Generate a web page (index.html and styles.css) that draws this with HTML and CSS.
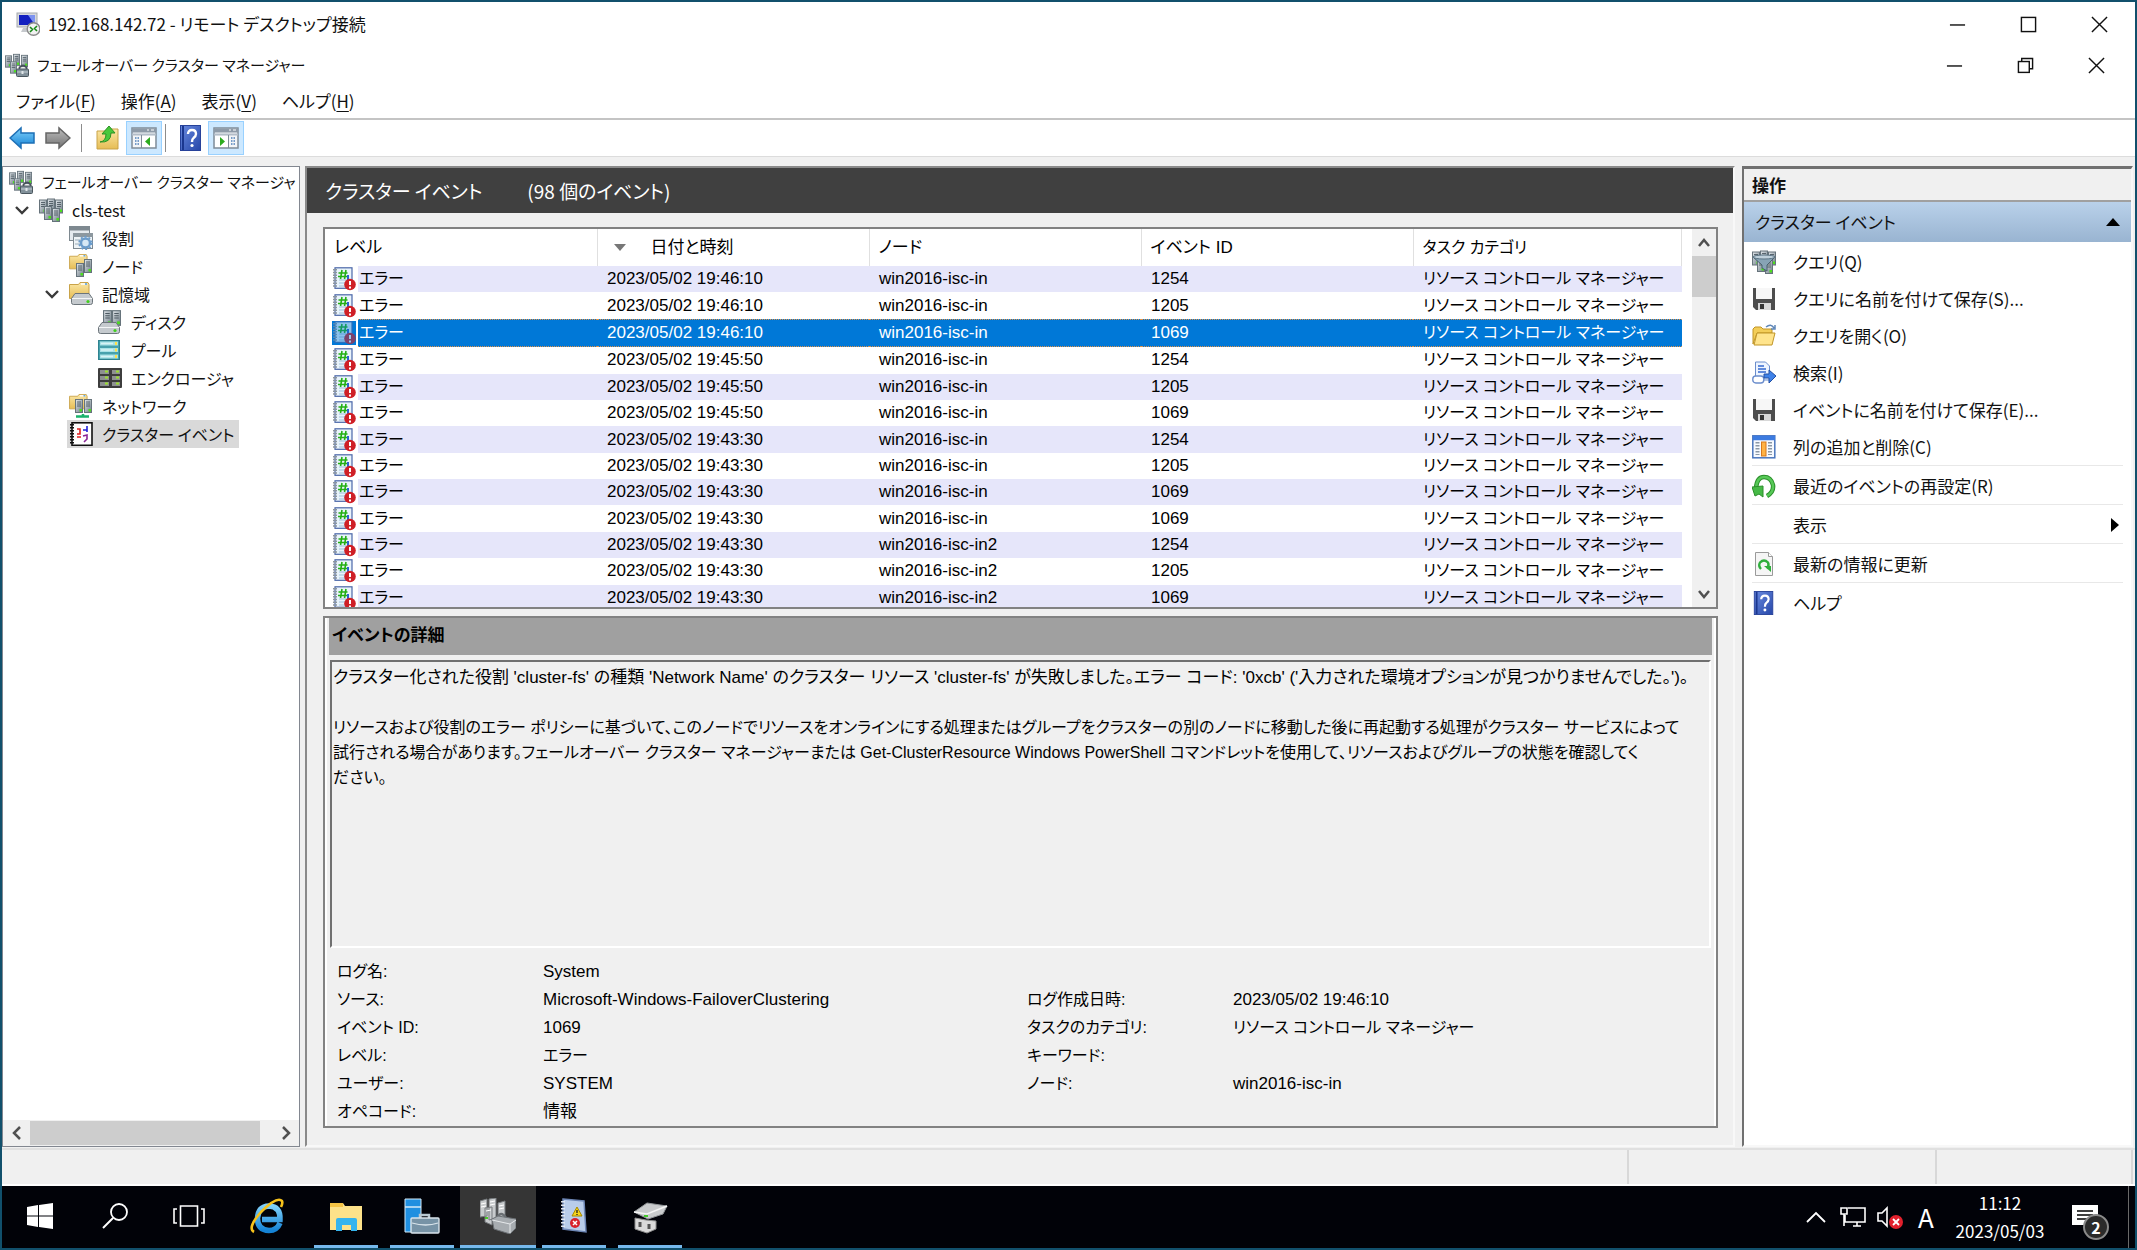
FILE: index.html
```
<!DOCTYPE html>
<html lang="ja">
  <head>
    <meta charset="UTF-8" />
    <meta name="viewport" content="width=device-width, initial-scale=1.0" />
    <title>192.168.142.72 - リモート デスクトップ接続</title>
    <link rel="stylesheet" href="styles.css">
  </head>
  <body>
    <!-- icon sprites -->
    <svg class="sprites" aria-hidden="true">
      <defs>
        <linearGradient id="g-folder" x1="0" y1="0" x2="0" y2="1">
          <stop offset="0" stop-color="#fbe7a6" />
          <stop offset="1" stop-color="#e6bd55" />
        </linearGradient>
        <linearGradient id="g-metal" x1="0" y1="0" x2="1" y2="1">
          <stop offset="0" stop-color="#e3e8ec" />
          <stop offset="1" stop-color="#6d7b85" />
        </linearGradient>
        <linearGradient id="g-blue" x1="0" y1="0" x2="0" y2="1">
          <stop offset="0" stop-color="#7fd0fa" />
          <stop offset="1" stop-color="#1583d6" />
        </linearGradient>
        <linearGradient id="g-gray" x1="0" y1="0" x2="0" y2="1">
          <stop offset="0" stop-color="#bdbdbd" />
          <stop offset="1" stop-color="#737373" />
        </linearGradient>
        <linearGradient id="g-help" x1="0" y1="0" x2="1" y2="1">
          <stop offset="0" stop-color="#6a8be0" />
          <stop offset="1" stop-color="#2546a8" />
        </linearGradient>
      </defs>
      <symbol id="i-server" viewBox="0 0 8 14">
        <rect x=".5" y=".5" width="7" height="13" fill="url(#g-metal)" stroke="#66737b" />
        <path d="M2 3h4M2 5h4M2 7h4" stroke="#4d5962" stroke-width=".9" />
        <rect x="4.500" y="10" width="2.500" height="2.500" fill="#4be01c" />
      </symbol>
      <symbol id="i-servers" viewBox="0 0 24 24">
        <use href="#i-server" x="0" y="1" width="8" height="15" />
        <use href="#i-server" x="8" y="0" width="8" height="15" />
        <use href="#i-server" x="16" y="1" width="8" height="15" />
        <use href="#i-server" x="5" y="8" width="8" height="14" />
        <use href="#i-server" x="13" y="10" width="8" height="14" />
      </symbol>
      <symbol id="i-cluster" viewBox="0 0 24 24">
        <use href="#i-server" x="0" y="1" width="7" height="15" />
        <use href="#i-server" x="8" y="0" width="7" height="14" />
        <use href="#i-server" x="16" y="1" width="7" height="14" />
        <use href="#i-server" x="5" y="8" width="7" height="13" />
        <path d="M14.500 16v-1.500q3.500-4 7 0V16" fill="none" stroke="#47535b" stroke-width="1.800" />
        <rect x="11.500" y="16" width="12" height="7.500" rx="1" fill="#82919a" stroke="#4a565e" />
        <path d="M12 19h11" stroke="#c6d0d6" />
        <rect x="16.500" y="18" width="2" height="3" fill="#e1e7ea" />
      </symbol>
      <symbol id="i-folder" viewBox="0 0 22 20">
        <path d="M.5 2.500h9l1.500-2h8l1 2v14H.5z" fill="url(#g-folder)" stroke="#c9a349" />
        <path d="M12 2h6" stroke="#fff" stroke-width="1.500" />
        <path d="M16 2h2" stroke="#4c9de0" stroke-width="1.500" />
      </symbol>
      <symbol id="i-drive" viewBox="0 0 22 12">
        <path d="M4 .5h14l3.500 5v4q0 2-2 2h-17q-2 0-2-2v-4z" fill="#c5cace" stroke="#6c757b" />
        <path d="M1 5.500h20" stroke="#f4f6f7" />
        <circle cx="17" cy="8.500" r="1.600" fill="#41cf1e" />
      </symbol>
      <symbol id="i-roles" viewBox="0 0 24 24">
        <rect x=".5" y=".5" width="20" height="14" fill="#e5eaee" stroke="#7e8990" />
        <path d="M0 2.500h21" stroke="#7e8990" stroke-width="4" />
        <rect x="4.500" y="7.500" width="19" height="15" fill="#eef3f6" stroke="#7e8990" />
        <path d="M4 9h20" stroke="#8d989f" stroke-width="4" />
        <path d="M6 14h6M6 18h6" stroke="#9bacb8" />
        <circle cx="16.500" cy="17" r="4.500" fill="#d6e8f5" stroke="#6b9ccb" stroke-width="2.500" />
        <circle cx="16.500" cy="17" r="6.300" fill="none" stroke="#6b9ccb" stroke-width="1.800" stroke-dasharray="2 2" />
      </symbol>
      <symbol id="i-nodes" viewBox="0 0 24 24">
        <use href="#i-folder" width="20" height="18" />
        <use href="#i-server" x="7" y="8" width="8" height="16" />
        <use href="#i-server" x="15" y="4" width="8" height="16" />
      </symbol>
      <symbol id="i-storage" viewBox="0 0 24 24">
        <use href="#i-folder" width="22" height="20" />
        <use href="#i-drive" x="2" y="11" width="22" height="12" />
      </symbol>
      <symbol id="i-disk" viewBox="0 0 24 24">
        <use href="#i-server" x="5" y="0" width="9" height="16" />
        <use href="#i-server" x="14" y="0" width="9" height="16" />
        <use href="#i-drive" x="0" y="12" width="22" height="12" />
      </symbol>
      <symbol id="i-pool" viewBox="0 0 24 24">
        <rect x=".5" y="2.500" width="21" height="19" fill="#46a2ad" stroke="#2f8390" />
        <path d="M2 5.500h18M2 12h18M2 18.500h18" stroke="#a6e2e6" stroke-width="4" />
        <path d="M3 5.500h12M3 12h12M3 18.500h12" stroke="#d6f4f5" stroke-width="1.500" />
        <path d="M17 5.500h2M17 12h2M17 18.500h2" stroke="#ffe14a" stroke-width="3" />
      </symbol>
      <symbol id="i-enclosure" viewBox="0 0 24 24">
        <rect x="0" y="2" width="24" height="20" rx="1" fill="#3d3d3d" />
        <path d="M2 6h9M2 12h9M2 18h9M14 6h8M14 12h8M14 18h8" stroke="#8e9191" stroke-width="4" />
        <path d="M7 5.500h3M7 11.500h3M7 17.500h3M18 5.500h3M18 11.500h3M18 17.500h3" stroke="#9be030" stroke-width="2" />
      </symbol>
      <symbol id="i-network" viewBox="0 0 24 24">
        <use href="#i-folder" width="20" height="18" />
        <use href="#i-server" x="6" y="4" width="8" height="16" />
        <use href="#i-server" x="15" y="4" width="8" height="16" />
        <path d="M7 22.500h13M14 20v3" stroke="#19b36b" stroke-width="2.500" />
      </symbol>
      <symbol id="i-events" viewBox="0 0 24 24">
        <rect x="3" y=".8" width="20" height="22.500" fill="#fff" stroke="#111" stroke-width="1.600" />
        <path d="M3 2v21" stroke="#111" stroke-width="4" stroke-dasharray="1.500 1.500" />
        <path d="M8 7h3v5H8M8 15h4" stroke="#e02020" stroke-width="1.600" fill="none" />
        <path d="M18 4v6M14 8h4" stroke="#2222d8" stroke-width="1.600" />
        <path d="M14 14l4-1v4l-3 3" stroke="#8a2596" stroke-width="1.600" fill="none" />
      </symbol>
      <symbol id="i-error" viewBox="0 0 24 24">
        <rect x="3" y=".8" width="17" height="20.500" fill="#e9f3fb" stroke="#4a66a8" stroke-width="1.200" />
        <path d="M3 2v19" stroke="#8b959e" stroke-width="4" stroke-dasharray="1.500 1.200" />
        <path d="M7 13h11M7 16h9M7 19h6" stroke="#9bc0dd" />
        <path d="M10 3L8.500 12M14 3l-1.500 9M6.500 6h9M6 9.500h9" stroke="#23b014" stroke-width="1.600" />
        <path d="M16 8v6" stroke="#2c62cf" stroke-width="2" />
        <circle cx="18" cy="17.500" r="5.800" fill="#cf1f26" />
        <path d="M18 14v4M18 19.500v2" stroke="#fff" stroke-width="2" />
      </symbol>
      <symbol id="i-help" viewBox="0 0 22 26">
        <rect x=".5" y=".5" width="20" height="25" fill="url(#g-help)" stroke="#27429a" />
        <path d="M3 1v24" stroke="#1b378f" stroke-width="2" />
        <path d="M8 9q0-4 4-4t4 4q0 2-2.500 4Q12 14 12 17" fill="none" stroke="#fff" stroke-width="2.400" />
        <circle cx="12" cy="20.500" r="1.600" fill="#fff" />
      </symbol>
      <symbol id="i-save" viewBox="0 0 24 24">
        <path d="M1 1h22v22H4l-3-3z" fill="#4d4d4d" />
        <path d="M4 1h16v11H4z" fill="#f7f7f7" />
        <path d="M6 16h13v7H6z" fill="#d7d7d7" />
        <path d="M8 17h4v5H8z" fill="#333" />
      </symbol>
      <symbol id="i-open" viewBox="0 0 24 24">
        <path d="M1 5l2-2h6l2 2h9v4H5L1 20z" fill="#f3cd58" stroke="#c19526" />
        <path d="M5 9h18l-3 12H2z" fill="#ffe48c" stroke="#c19526" />
        <path d="M14 3q5-4 8 1M23 1v4h-4" fill="none" stroke="#5f87b8" stroke-width="1.500" />
      </symbol>
      <symbol id="i-find" viewBox="0 0 24 24">
        <path d="M3.500 1h10l4 4v14h-14z" fill="#edf4ff" stroke="#6b8dcc" />
        <path d="M6 5h6M6 8h8M6 11h8" stroke="#3568cf" stroke-width="1.500" />
        <rect x=".8" y="15" width="11" height="7" rx="3" fill="#fff" stroke="#6b8dcc" stroke-width="1.400" />
        <path d="M12 13h5V9l7 6-7 7v-5h-5z" fill="#3f82e8" stroke="#224fa3" />
      </symbol>
      <symbol id="i-columns" viewBox="0 0 24 24">
        <rect x=".8" y=".8" width="22" height="22" fill="#f7faff" stroke="#4a76bd" stroke-width="1.500" />
        <path d="M1 3h22" stroke="#3c7be0" stroke-width="4.500" />
        <path d="M5.500 7v13M18 7v13" stroke="#8a97a6" stroke-width="4" stroke-dasharray="1.500 1.500" />
        <rect x="9.500" y="7" width="4.500" height="14" fill="#ffb245" stroke="#d8791b" />
      </symbol>
      <symbol id="i-reset" viewBox="0 0 24 24">
        <path d="M15 22q7-4 6-11Q19 3 12 3q-7 0-8 11" fill="none" stroke="#2b8f2b" stroke-width="4.500" />
        <path d="M15 22q7-4 6-11Q19 3 12 3q-7 0-8 11" fill="none" stroke="#57c957" stroke-width="2.500" />
        <path d="M0 13l11-1v11l-4-3-4 2z" fill="#46b946" stroke="#2b8f2b" />
      </symbol>
      <symbol id="i-refresh" viewBox="0 0 24 24">
        <path d="M3.500.5h13l4 4v19h-17z" fill="#f5f5f5" stroke="#9a9a9a" />
        <path d="M16.500.5v4h4" fill="#fff" stroke="#9a9a9a" />
        <path d="M9 17q-3-3-1-6.500 4-4 8 0 1.500 3-1 6" fill="none" stroke="#2fae3c" stroke-width="2.400" />
        <path d="M12 14h7v6z" fill="#2fae3c" />
      </symbol>
      <symbol id="i-query" viewBox="0 0 24 24">
        <use href="#i-servers" width="24" height="24" />
        <path d="M1 7h22l-8 8v6l-5-3v-3z" fill="#87a3b5" stroke="#49616f" />
        <ellipse cx="12" cy="7" rx="11" ry="2" fill="#bfd0db" stroke="#5b7484" />
      </symbol>
      <symbol id="i-pane" viewBox="0 0 26 22">
        <rect x="1" y="1" width="24" height="20" fill="#f3f5f7" stroke="#7f8c99" stroke-width="1.500" />
        <path d="M1 3.500h24" stroke="#8d9aa8" stroke-width="4" />
        <path d="M16 3h2M20 3h3" stroke="#fff" />
        <path d="M1 7.500h24" stroke="#b3bdc8" stroke-width="2" />
      </symbol>
      <symbol id="i-chev" viewBox="0 0 16 10">
        <path d="M2 2l6 6 6-6" fill="none" stroke="#3a3a3a" stroke-width="2.400" />
      </symbol>
      <symbol id="i-min" viewBox="0 0 18 18"><path d="M1 9.500h16" stroke="#111" stroke-width="1.500" /></symbol>
      <symbol id="i-max" viewBox="0 0 18 18"><rect x="1.500" y="1.500" width="15" height="15" fill="none" stroke="#111" stroke-width="1.500" /></symbol>
      <symbol id="i-restore" viewBox="0 0 18 18">
        <path d="M5 4.500V1.500h11.500v11H13" fill="none" stroke="#111" stroke-width="1.500" />
        <rect x="1.500" y="4.800" width="11.500" height="11.500" fill="none" stroke="#111" stroke-width="1.500" />
      </symbol>
      <symbol id="i-close" viewBox="0 0 18 18"><path d="M1 1l16 16M17 1L1 17" stroke="#111" stroke-width="1.500" /></symbol>
    </svg>

    <header class="titlebar">
      <svg class="icon" viewBox="0 0 24 24">
        <rect x="1" y="1" width="20" height="14" fill="#d7d9dc" stroke="#a4a8ad" />
        <rect x="3" y="3" width="16" height="10" fill="#1320c0" />
        <path d="M12 3h7v10z" fill="#7d93f0" />
        <path d="M5 20h12v-4H7z" fill="#c6c9cd" />
        <circle cx="17.500" cy="17" r="6.300" fill="#f2f2f2" stroke="#8a8a8a" stroke-width="1.400" />
        <path d="M14 15l2.500 2.500L14 20M21 14l-2.500 2.500L21 19" fill="none" stroke="#168a16" stroke-width="1.600" />
      </svg>
      <h1>192.168.142.72 - リモート デスクトップ接続</h1>
      <button class="win-btn" aria-label="最小化"><svg><use href="#i-min" /></svg></button>
      <button class="win-btn" aria-label="最大化"><svg><use href="#i-max" /></svg></button>
      <button class="win-btn" aria-label="閉じる"><svg><use href="#i-close" /></svg></button>
    </header>
    <div class="titlebar inner">
      <svg class="icon"><use href="#i-cluster" /></svg>
      <h2>フェールオーバー クラスター マネージャー</h2>
      <button class="win-btn" aria-label="最小化"><svg><use href="#i-min" /></svg></button>
      <button class="win-btn" aria-label="元に戻す"><svg><use href="#i-restore" /></svg></button>
      <button class="win-btn" aria-label="閉じる"><svg><use href="#i-close" /></svg></button>
    </div>

    <nav class="menubar">
      <button>ファイル(<u>F</u>)</button>
      <button>操作(<u>A</u>)</button>
      <button>表示(<u>V</u>)</button>
      <button>ヘルプ(<u>H</u>)</button>
    </nav>

    <div class="toolbar">
      <button aria-label="戻る"><svg class="arrow" viewBox="0 0 26 24"><path d="M1 12L12 2v5h13v10H12v5z" fill="url(#g-blue)" stroke="#1d6fb5" stroke-width="1.500" /></svg></button>
      <button aria-label="進む"><svg class="arrow" viewBox="0 0 26 24"><path d="M25 12L14 2v5H1v10h13v5z" fill="url(#g-gray)" stroke="#666" stroke-width="1.500" /></svg></button>
      <span class="sep"></span>
      <button aria-label="1 つ上のレベルへ"><svg class="icon" viewBox="0 0 24 24">
        <path d="M1 5h9l2-2h10v20H1z" fill="url(#g-folder)" stroke="#c9a349" />
        <path d="M4 16q6-1 6-8H6l7-8 6 7h-4q0 10-11 9z" fill="#48c83b" stroke="#2c9124" />
      </svg></button>
      <button class="on" aria-label="コンソール ツリー"><svg class="pane" viewBox="0 0 26 22">
        <use href="#i-pane" width="26" height="22" />
        <path d="M4 11h4M4 14h4M4 17h4" stroke="#4d7fb9" stroke-width="1.500" stroke-dasharray="1.500 1" />
        <rect x="11" y="9" width="13" height="11" fill="#fff" />
        <path d="M10.500 8v13" stroke="#7f8c99" />
        <path d="M19 10v9l-5-4.500z" fill="#2bab1e" />
      </svg></button>
      <span class="sep"></span>
      <button aria-label="ヘルプ"><svg class="book"><use href="#i-help" /></svg></button>
      <button class="on" aria-label="操作ウィンドウ"><svg class="pane" viewBox="0 0 26 22">
        <use href="#i-pane" width="26" height="22" />
        <rect x="2" y="9" width="13" height="11" fill="#fff" />
        <path d="M15.500 8v13" stroke="#7f8c99" />
        <path d="M18 11h5M18 14h5M18 17h5" stroke="#4d7fb9" stroke-width="1.500" stroke-dasharray="1.500 1" />
        <path d="M7 10v9l5-4.500z" fill="#2bab1e" />
      </svg></button>
    </div>

    <main class="workspace">
      <nav class="tree">
        <ul>
          <li class="l0"><svg class="icon"><use href="#i-cluster" /></svg><a href="#">フェールオーバー クラスター マネージャ</a></li>
          <li class="l1"><svg class="chev"><use href="#i-chev" /></svg><svg class="icon"><use href="#i-servers" /></svg><a href="#">cls-test</a></li>
          <li class="l2"><svg class="icon"><use href="#i-roles" /></svg><a href="#">役割</a></li>
          <li class="l2"><svg class="icon"><use href="#i-nodes" /></svg><a href="#">ノード</a></li>
          <li class="l2 open"><svg class="chev"><use href="#i-chev" /></svg><svg class="icon"><use href="#i-storage" /></svg><a href="#">記憶域</a></li>
          <li class="l3"><svg class="icon"><use href="#i-disk" /></svg><a href="#">ディスク</a></li>
          <li class="l3"><svg class="icon"><use href="#i-pool" /></svg><a href="#">プール</a></li>
          <li class="l3"><svg class="icon"><use href="#i-enclosure" /></svg><a href="#">エンクロージャ</a></li>
          <li class="l2"><svg class="icon"><use href="#i-network" /></svg><a href="#">ネットワーク</a></li>
          <li class="l2"><span class="selected"><svg class="icon"><use href="#i-events" /></svg><a href="#">クラスター イベント</a></span></li>
        </ul>
        <div class="hscroll">
          <button aria-label="左へ"><svg viewBox="0 0 10 16"><path d="M8 2L2 8l6 6" /></svg></button>
          <span class="thumb"></span>
          <button aria-label="右へ"><svg viewBox="0 0 10 16"><path d="M2 2l6 6-6 6" /></svg></button>
        </div>
      </nav>

      <section class="center">
        <div class="center-head">
          <h2>クラスター イベント</h2>
          <span>(98 個のイベント)</span>
        </div>
        <div class="center-body">
          <div class="list">
            <table>
              <colgroup>
                <col class="c-icon" />
                <col class="c-level" />
                <col class="c-mid" />
                <col class="c-mid" />
                <col class="c-mid" />
                <col />
              </colgroup>
              <thead>
                <tr>
                  <th colspan="2">レベル</th>
                  <th class="sorted"><svg viewBox="0 0 12 7"><path d="M0 0h12L6 7z" /></svg>日付と時刻</th>
                  <th>ノード</th>
                  <th>イベント ID</th>
                  <th>タスク カテゴリ</th>
                </tr>
              </thead>
              <tbody>
                <tr><td><svg class="icon"><use href="#i-error" /></svg></td><td>エラー</td><td>2023/05/02 19:46:10</td><td>win2016-isc-in</td><td>1254</td><td>リソース コントロール マネージャー</td></tr>
                <tr><td><svg class="icon"><use href="#i-error" /></svg></td><td>エラー</td><td>2023/05/02 19:46:10</td><td>win2016-isc-in</td><td>1205</td><td>リソース コントロール マネージャー</td></tr>
                <tr class="current"><td><svg class="icon"><use href="#i-error" /></svg></td><td>エラー</td><td>2023/05/02 19:46:10</td><td>win2016-isc-in</td><td>1069</td><td>リソース コントロール マネージャー</td></tr>
                <tr><td><svg class="icon"><use href="#i-error" /></svg></td><td>エラー</td><td>2023/05/02 19:45:50</td><td>win2016-isc-in</td><td>1254</td><td>リソース コントロール マネージャー</td></tr>
                <tr><td><svg class="icon"><use href="#i-error" /></svg></td><td>エラー</td><td>2023/05/02 19:45:50</td><td>win2016-isc-in</td><td>1205</td><td>リソース コントロール マネージャー</td></tr>
                <tr><td><svg class="icon"><use href="#i-error" /></svg></td><td>エラー</td><td>2023/05/02 19:45:50</td><td>win2016-isc-in</td><td>1069</td><td>リソース コントロール マネージャー</td></tr>
                <tr><td><svg class="icon"><use href="#i-error" /></svg></td><td>エラー</td><td>2023/05/02 19:43:30</td><td>win2016-isc-in</td><td>1254</td><td>リソース コントロール マネージャー</td></tr>
                <tr><td><svg class="icon"><use href="#i-error" /></svg></td><td>エラー</td><td>2023/05/02 19:43:30</td><td>win2016-isc-in</td><td>1205</td><td>リソース コントロール マネージャー</td></tr>
                <tr><td><svg class="icon"><use href="#i-error" /></svg></td><td>エラー</td><td>2023/05/02 19:43:30</td><td>win2016-isc-in</td><td>1069</td><td>リソース コントロール マネージャー</td></tr>
                <tr><td><svg class="icon"><use href="#i-error" /></svg></td><td>エラー</td><td>2023/05/02 19:43:30</td><td>win2016-isc-in</td><td>1069</td><td>リソース コントロール マネージャー</td></tr>
                <tr><td><svg class="icon"><use href="#i-error" /></svg></td><td>エラー</td><td>2023/05/02 19:43:30</td><td>win2016-isc-in2</td><td>1254</td><td>リソース コントロール マネージャー</td></tr>
                <tr><td><svg class="icon"><use href="#i-error" /></svg></td><td>エラー</td><td>2023/05/02 19:43:30</td><td>win2016-isc-in2</td><td>1205</td><td>リソース コントロール マネージャー</td></tr>
                <tr><td><svg class="icon"><use href="#i-error" /></svg></td><td>エラー</td><td>2023/05/02 19:43:30</td><td>win2016-isc-in2</td><td>1069</td><td>リソース コントロール マネージャー</td></tr>
              </tbody>
            </table>
            <div class="vscroll">
              <button aria-label="上へ"><svg viewBox="0 0 14 10"><path d="M2 8l5-6 5 6" /></svg></button>
              <span class="thumb"></span>
              <button aria-label="下へ"><svg viewBox="0 0 14 10"><path d="M2 2l5 6 5-6" /></svg></button>
            </div>
          </div>

          <article class="detail">
            <h3>イベントの詳細</h3>
            <div class="message">
              <p>クラスター化された役割 'cluster-fs' の種類 'Network Name' のクラスター リソース 'cluster-fs' が失敗しました。エラー コード: '0xcb' ('入力された環境オプションが見つかりませんでした。')。</p>
              <p class="body">リソースおよび役割のエラー ポリシーに基づいて、このノードでリソースをオンラインにする処理またはグループをクラスターの別のノードに移動した後に再起動する処理がクラスター サービスによって<br />試行される場合があります。フェールオーバー クラスター マネージャーまたは Get-ClusterResource Windows PowerShell コマンドレットを使用して、リソースおよびグループの状態を確認してく<br />ださい。</p>
            </div>
            <dl>
              <dt>ログ名:</dt><dd class="wide">System</dd>
              <dt>ソース:</dt><dd>Microsoft-Windows-FailoverClustering</dd>
              <dt>ログ作成日時:</dt><dd>2023/05/02 19:46:10</dd>
              <dt>イベント ID:</dt><dd>1069</dd>
              <dt>タスクのカテゴリ:</dt><dd class="kana">リソース コントロール マネージャー</dd>
              <dt>レベル:</dt><dd class="kana">エラー</dd>
              <dt>キーワード:</dt><dd></dd>
              <dt>ユーザー:</dt><dd>SYSTEM</dd>
              <dt>ノード:</dt><dd>win2016-isc-in</dd>
              <dt>オペコード:</dt><dd class="wide">情報</dd>
            </dl>
          </article>
        </div>
      </section>

      <aside class="actions">
        <h2>操作</h2>
        <button class="group">クラスター イベント<svg viewBox="0 0 14 8"><path d="M0 8h14L7 0z" /></svg></button>
        <ul>
          <li><button><svg class="icon"><use href="#i-query" /></svg>クエリ(Q)</button></li>
          <li><button><svg class="icon"><use href="#i-save" /></svg>クエリに名前を付けて保存(S)...</button></li>
          <li><button><svg class="icon"><use href="#i-open" /></svg>クエリを開く(O)</button></li>
          <li><button><svg class="icon"><use href="#i-find" /></svg>検索(I)</button></li>
          <li><button><svg class="icon"><use href="#i-save" /></svg>イベントに名前を付けて保存(E)...</button></li>
          <li><button><svg class="icon"><use href="#i-columns" /></svg>列の追加と削除(C)</button></li>
          <li class="line"><button><svg class="icon"><use href="#i-reset" /></svg>最近のイベントの再設定(R)</button></li>
          <li class="line"><button><span class="icon"></span>表示<svg class="more" viewBox="0 0 8 14"><path d="M0 0v14l8-7z" /></svg></button></li>
          <li class="line"><button><svg class="icon"><use href="#i-refresh" /></svg>最新の情報に更新</button></li>
          <li class="line"><button><svg class="icon"><use href="#i-help" /></svg>ヘルプ</button></li>
        </ul>
      </aside>
    </main>

    <div class="statusbar"><span></span><span></span><span></span></div>

    <footer class="taskbar">
      <button aria-label="スタート"><svg class="start" viewBox="0 0 26 26"><path d="M0 4l11-2v10.500H0zM12 2l14-2v12.500H12zM0 13.500h11V24L0 22zM12 13.500h14V26l-14-2z" fill="#fff" /></svg></button>
      <button class="tool" aria-label="検索"><svg class="start" viewBox="0 0 26 26"><circle cx="17" cy="9" r="8" fill="none" stroke="#fff" stroke-width="1.800" /><path d="M11 15L1 25" stroke="#fff" stroke-width="2" /></svg></button>
      <button class="tool" aria-label="タスク ビュー"><svg class="view" viewBox="0 0 32 24"><path d="M7.500 2h17v20h-17zM4 5H1v14h3M28 5h3v14h-3" fill="none" stroke="#fff" stroke-width="1.600" /></svg></button>
      <button class="browser" aria-label="Internet Explorer"><svg class="app" viewBox="0 0 36 36">
        <path d="M31 25Q28 32.500 20 32.500 8.500 32 8.500 20.500 9 8.500 20 8 31.500 8.500 31 21.500H13" fill="none" stroke="url(#g-blue)" stroke-width="5.500" />
        <path d="M5 34Q-2 30 12 14 28-2 33 3q1 2-1 6" fill="none" stroke="#f6c21c" stroke-width="2.600" />
      </svg></button>
      <button class="running" aria-label="エクスプローラー"><svg class="app" viewBox="0 0 36 36">
        <path d="M2 5h13l2 3h17v24H2z" fill="#fde28a" />
        <path d="M2 5h13v4H2z" fill="#f5c445" />
        <path d="M8 33V22q0-2 2-2h17q2 0 2 2v11h-6v-6h-9v6z" fill="#35b4ee" />
      </svg></button>
      <button class="running" aria-label="サーバー マネージャー"><svg class="app" viewBox="0 0 36 36">
        <path d="M1 1h16v33H1z" fill="#1f8fe0" stroke="#d4eaf8" />
        <path d="M1 9h16" stroke="#d4eaf8" stroke-width="1.500" />
        <path d="M16 20v-3h9v3" fill="none" stroke="#b9c8d1" stroke-width="2.500" />
        <rect x="7" y="20" width="28" height="15" rx="1" fill="#7793a6" stroke="#d9e4eb" stroke-width="1.400" />
        <path d="M8 25q14 4 26 0" fill="none" stroke="#d9e4eb" stroke-width="1.300" />
      </svg></button>
      <button class="running active" aria-label="フェールオーバー クラスター マネージャー"><svg class="app" viewBox="0 0 36 36">
        <path d="M0 3l7-2v17l-7 1zM9 1l7-1v20l-7 2zM18 5l7-2v20l-7 2zM5 10l7-1v18l-7-3z" fill="#c8cbcd" stroke="#777b7e" />
        <path d="M1 6l5-1M10 4l5-1M19 8l5-1M6 13l5-1M1 9l5-1M10 7l5-1M19 11l5-1" stroke="#fff" />
        <path d="M17 20q4-8 9 0" fill="none" stroke="#6b7074" stroke-width="2.500" />
        <path d="M12 21l6-3 18 3v9l-6 6-16-5z" fill="#a7acb0" stroke="#6b7074" />
        <path d="M12 22l18 4 6-4M30 26v9" fill="none" stroke="#e5e8ea" />
        <path d="M5 20h3" stroke="#4cc52a" stroke-width="2" />
      </svg></button>
      <button class="running" aria-label="イベント ビューアー"><svg class="app" viewBox="0 0 36 36">
        <path d="M7 1l21 2 2 31-23-3z" fill="#b9cdea" stroke="#6d86b5" stroke-width="1.500" />
        <path d="M7 3v28" stroke="#e1e7f0" stroke-width="4" stroke-dasharray="1.500 2" />
        <path d="M21 9l5 9h-10z" fill="#f7d41c" stroke="#a78a00" />
        <path d="M21 12v3M21 16v1" stroke="#222" stroke-width="1.300" />
        <circle cx="19" cy="25" r="5" fill="#d8222b" />
        <path d="M17 23l4 4M21 23l-4 4" stroke="#fff" stroke-width="1.500" />
      </svg></button>
      <button class="running" aria-label="iSCSI イニシエーター"><svg class="app" viewBox="0 0 36 36">
        <path d="M3 20l11 2 10 1v8l-9 4-12-4z" fill="#dadada" stroke="#8d8d8d" />
        <path d="M8 24v5M17 26v5" stroke="#555" stroke-width="3" />
        <path d="M2 14L15 5l20 3-4 8-15 5z" fill="#c9cbcd" stroke="#909497" />
        <path d="M2 14l13 2 20-8" fill="none" stroke="#f4f4f4" stroke-width="1.500" />
        <path d="M12 18h4" stroke="#43c92b" stroke-width="2" />
      </svg></button>

      <div class="tray">
        <button aria-label="隠れているインジケーター"><svg viewBox="0 0 26 26"><path d="M4 18l9-9 9 9" fill="none" stroke="#fff" stroke-width="1.800" /></svg></button>
        <button aria-label="ネットワーク"><svg viewBox="0 0 26 26"><path d="M8 4h17v14H5V11M13 22h8M17 18v4M1 4h6v6H1zM4 10v12" fill="none" stroke="#fff" stroke-width="1.600" /></svg></button>
        <button aria-label="音量"><svg viewBox="0 0 26 26"><path d="M1 9h4l5-5v18l-5-5H1z" fill="none" stroke="#fff" stroke-width="1.600" /><circle cx="19" cy="18" r="7" fill="#e1202c" /><path d="M16 15l6 6M22 15l-6 6" stroke="#fff" stroke-width="1.800" /></svg></button>
        <button class="ime" aria-label="入力モード">A</button>
        <button class="clock"><time>11:12</time><time>2023/05/03</time></button>
        <button class="notice" aria-label="通知"><svg viewBox="0 0 26 26"><path d="M0 1h26v20H17l-5 5v-5H0z" fill="#fff" /><path d="M5 7h16M5 11h16M5 15h10" stroke="#000" stroke-width="1.500" /></svg><span class="badge">2</span></button>
      </div>
    </footer>
  </body>
</html>
```
FILE: styles.css
```
* {
  box-sizing: border-box;
}
body {
  margin: 0;
  min-height: 100vh;
  display: flex;
  flex-direction: column;
  border: 2px solid #11506c;
  background-color: #f0f0f0;
  color: #111;
  font-family: "Noto Sans CJK JP", sans-serif;
  font-size: 17px;
  line-height: 28px;
  font-feature-settings: "palt";
  white-space: nowrap;
}
h1,
h2,
h3,
p,
ul,
dl,
dd {
  margin: 0;
  padding: 0;
  font-size: inherit;
  font-weight: normal;
}
ul {
  list-style: none;
}
a {
  color: inherit;
  text-decoration: none;
}
button {
  padding: 0;
  border: 0;
  background: none;
  color: inherit;
  font: inherit;
  font-feature-settings: inherit;
}
svg {
  display: block;
  flex: none;
}
.sprites {
  position: absolute;
  width: 0;
  height: 0;
}
.icon {
  width: 24px;
  height: 24px;
  flex: none;
}

/* title bars and menu */
.titlebar {
  display: flex;
  align-items: center;
  height: 44px;
  padding-left: 14px;
  background-color: white;
}
.titlebar h1,
.titlebar h2 {
  flex: 1;
  margin-left: 8px;
}
.titlebar.inner {
  height: 38px;
  padding: 0 3px;
  font-size: 15px;
}
.win-btn {
  width: 71px;
  height: 100%;
  display: flex;
  align-items: center;
  justify-content: center;
}
.win-btn svg {
  width: 17px;
  height: 17px;
}
.menubar {
  display: flex;
  gap: 25px;
  height: 36px;
  padding-left: 14px;
  background-color: white;
  border-bottom: 2px solid #c4c4c4;
}
u {
  text-underline-offset: 3px;
}
.toolbar {
  display: flex;
  align-items: center;
  gap: 10px;
  height: 37px;
  padding-left: 7px;
  background-color: white;
  border-bottom: 1px solid #dcdcdc;
}
.toolbar button {
  display: flex;
  align-items: center;
  justify-content: center;
}
.toolbar .arrow {
  width: 26px;
  height: 24px;
}
.toolbar .sep {
  width: 1px;
  height: 28px;
  margin-right: 4px;
  background-color: #8c8c8c;
}
.toolbar .on {
  width: 36px;
  height: 34px;
  margin-left: -4px;
  background-color: #cce8ff;
  border: 1px solid #99d1ff;
}
.toolbar .on + .sep {
  margin-left: -7px;
}
.toolbar .pane {
  width: 26px;
  height: 22px;
}
.toolbar .book {
  width: 22px;
  height: 26px;
}

/* panes */
.workspace {
  flex: 1;
  display: flex;
  padding: 9px 2px 1px 0;
}
.tree {
  width: 298px;
  display: flex;
  flex-direction: column;
  padding-top: 1px;
  background-color: white;
  border: 1px solid #828790;
  font-size: 16px;
}
.tree ul {
  flex: 1;
}
.tree li {
  display: flex;
  align-items: center;
  height: 28px;
}
.tree a {
  margin-left: 9px;
}
.tree .chev {
  width: 16px;
  height: 10px;
  margin-right: 9px;
}
.tree .l0 {
  padding-left: 6px;
  font-size: 15px;
}
.l1 {
  padding-left: 11px;
}
.l2 {
  padding-left: 66px;
}
.l2.open {
  padding-left: 41px;
}
.l3 {
  padding-left: 95px;
}
.tree .selected {
  display: flex;
  align-items: center;
  height: 28px;
  margin-left: -2px;
  padding: 0 4px 0 2px;
  background-color: #d9d9d9;
}
.hscroll {
  display: flex;
  height: 26px;
  background-color: #f0f0f0;
}
.hscroll button {
  width: 27px;
  display: flex;
  align-items: center;
  justify-content: center;
}
.hscroll svg {
  width: 10px;
  height: 16px;
}
.hscroll path,
.vscroll path {
  fill: none;
  stroke: #505050;
  stroke-width: 2.5;
}
.hscroll .thumb {
  flex: 1;
  margin: 1px 12px 1px 0;
  background-color: #cdcdcd;
}

.center {
  flex: 1;
  min-width: 0;
  display: flex;
  flex-direction: column;
  margin: 0 7px 0 5px;
  border: 2px solid #f8f8f8;
  border-top-color: #8a8a8a;
  border-left-color: #8a8a8a;
}
.center-head {
  display: flex;
  align-items: center;
  gap: 45px;
  height: 45px;
  padding-left: 18px;
  background-color: #404040;
  color: white;
  font-size: 19px;
}
.center-body {
  flex: 1;
  display: flex;
  flex-direction: column;
  gap: 7px;
  padding: 14px 15px 17px 16px;
  color: black;
  font-family: "Liberation Sans", "Noto Sans CJK JP", sans-serif;
}
.list {
  display: flex;
  height: 382px;
  background-color: white;
  border: 2px solid #828282;
  overflow: hidden;
}
table {
  flex: 1;
  height: 382px;
  margin-right: 10px;
  border-collapse: collapse;
  table-layout: fixed;
  line-height: 24px;
}
.c-icon {
  width: 33px;
}
.c-level {
  width: 239px;
}
.c-mid {
  width: 272px;
}
th {
  height: 37px;
  padding: 0 9px;
  border-right: 1px solid #e0e0e0;
  font-weight: normal;
  text-align: left;
}
.sorted svg {
  display: inline-block;
  width: 12px;
  height: 7px;
  margin: 0 25px 2px 7px;
  fill: #777;
}
td {
  padding: 0 10px;
}
td:first-child {
  padding: 0 0 0 7px;
}
td:nth-child(2) {
  padding-left: 1px;
}
td:nth-child(2),
td:last-child,
th:last-child,
.kana,
.body,
dt {
  font-size: 16px;
}
tbody tr:nth-child(odd) td:not(:first-child) {
  background-color: #e6e6fa;
}
tbody tr.current td:not(:first-child) {
  background-color: #0078d7;
  color: white;
  border-top: 1px dotted #e0934a;
  border-bottom: 1px dotted #e0934a;
}
.current .icon {
  background-color: #0078d7;
}
.current use {
  opacity: 0.6;
}
.vscroll {
  display: flex;
  flex-direction: column;
  width: 24px;
  background-color: #f0f0f0;
}
.vscroll button {
  height: 27px;
  display: flex;
  align-items: center;
  justify-content: center;
}
.vscroll svg {
  width: 14px;
  height: 10px;
}
.vscroll .thumb {
  height: 41px;
  margin-bottom: auto;
  background-color: #cdcdcd;
}

.detail {
  flex: 1;
  display: flex;
  flex-direction: column;
  border: 2px solid #828282;
  box-shadow: inset 2px 0 white, inset -2px 0 white;
}
.detail h3 {
  height: 37px;
  margin: 0 4px;
  padding: 4px 3px;
  background-color: #a0a0a0;
  font-weight: bold;
}
.message {
  flex: 1;
  margin: 5px 5px 10px;
  padding: 3px 1px;
  border: 2px solid white;
  border-top-color: #707070;
  border-left-color: #707070;
  line-height: 25px;
}
.message p + p {
  margin-top: 25px;
}
dl {
  display: grid;
  grid-template-columns: 206px 484px 206px 1fr;
  padding-left: 12px;
}
dd {
  min-height: 28px;
}
dd.wide {
  grid-column: span 3;
}

.actions {
  width: 391px;
  background-color: white;
  border: 2px solid #f8f8f8;
  border-top: 3px solid #707070;
  border-left: 2px solid #707070;
}
.actions h2 {
  height: 33px;
  padding: 2px 8px;
  background-color: #f0f0f0;
  border-bottom: 2px solid #a0a0a0;
  font-weight: bold;
}
.actions .group {
  display: flex;
  align-items: center;
  justify-content: space-between;
  width: 100%;
  height: 40px;
  padding: 0 11px;
  background: linear-gradient(#b9d1ea, #99b4d1);
}
.group svg {
  width: 14px;
  height: 8px;
}
.actions ul {
  padding: 1px 8px;
}
.actions li button {
  display: flex;
  align-items: center;
  gap: 17px;
  width: 100%;
  height: 37px;
}
.actions .line {
  padding-top: 1px;
  border-top: 1px solid #e8e8e8;
}
.actions .more {
  width: 8px;
  height: 14px;
  margin: 0 4px 0 auto;
}

.statusbar {
  display: flex;
  height: 38px;
  border-top: 2px solid #e0e0e0;
  border-bottom: 2px solid white;
}
.statusbar span {
  flex: 1;
  border-right: 2px solid #d8d8d8;
}
.statusbar span:nth-child(2) {
  flex: 0 0 308px;
}
.statusbar span:nth-child(3) {
  flex: 0 0 196px;
  margin-right: 2px;
}

/* taskbar */
.taskbar {
  display: flex;
  height: 62px;
  background-color: #010208;
  color: white;
}
.taskbar > button {
  width: 76px;
  display: flex;
  align-items: center;
  justify-content: center;
  border-bottom: 3px solid transparent;
}
.taskbar > .tool {
  width: 74px;
}
.taskbar > .browser {
  width: 82px;
}
.taskbar .start {
  width: 26px;
  height: 26px;
}
.taskbar .view {
  width: 32px;
  height: 24px;
}
.taskbar .app {
  width: 36px;
  height: 36px;
}
.taskbar > .running {
  width: 64px;
  margin: 0 6px;
  border-bottom-color: #76b9ed;
}
.taskbar > .active {
  width: 76px;
  margin: 0;
  background-color: #353535;
}
.tray {
  display: flex;
  align-items: center;
  gap: 11px;
  margin-left: auto;
  margin-right: 6px;
  padding-right: 30px;
  border-right: 1px solid #6a6a6a;
}
.tray svg {
  width: 26px;
  height: 26px;
}
.ime {
  width: 24px;
  font-size: 26px;
}
.clock {
  width: 102px;
}
.clock time {
  display: block;
}
.notice {
  position: relative;
  margin-left: 10px;
}
.notice,
.notice svg {
  width: 26px;
}
.badge {
  position: absolute;
  top: 10px;
  left: 11px;
  width: 26px;
  height: 26px;
  border: 2px solid #8a8a8a;
  border-radius: 50%;
  background-color: #2b2b2b;
  font-size: 16px;
  font-weight: bold;
  line-height: 22px;
}
```
